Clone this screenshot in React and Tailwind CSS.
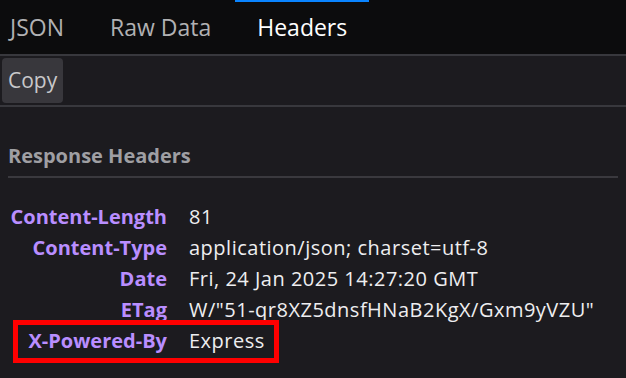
const headers = [
  ["Content-Length", "81"],
  ["Content-Type", "application/json; charset=utf-8"],
  ["Date", "Fri, 24 Jan 2025 14:27:20 GMT"],
  ["ETag", 'W/"51-qr8XZ5dnsfHNaB2KgX/Gxm9yVZU"'],
  ["X-Powered-By", "Express"],
];

export default function App() {
  return (
    <div className="h-[378px] w-[626px] overflow-hidden bg-[#1c1b1f] font-['Open_Sans',sans-serif]">
      {/* Tabs */}
      <div className="flex h-[54px] items-stretch bg-[#0c0c0d] text-[23px] text-[#b1b1b3]">
        <div className="flex items-center px-[10px]">JSON</div>
        <div className="ml-[26px] flex items-center px-[10px]">Raw Data</div>
        <div className="ml-[14px] flex items-center border-t-2 border-[#0a84ff] px-[22px] pb-[2px] text-white">
          Headers
        </div>
      </div>
      <div className="h-[2px] bg-[#38383d]" />

      {/* Toolbar */}
      <div className="flex h-[49px] items-center px-[2px]">
        <button className="h-[45px] rounded-[4px] bg-[#38373c] px-[6px] text-[21px] text-[#c8c8ca]">
          Copy
        </button>
      </div>
      <div className="h-[2px] bg-[#38383d]" />

      {/* Response headers */}
      <div className="px-[8px] pt-[34px]">
        <div className="border-b-2 border-[#3a393e] pb-[5px] text-[20px] font-bold text-[#9f9fa3]">
          Response Headers
        </div>
        <div className="mt-[23px] flex flex-col text-[20px]">
          {headers.map(([name, value]) => (
            <div key={name} className="relative flex h-[31px] items-center whitespace-nowrap">
              <div className="w-[159px] text-right font-bold text-[#b98eff]">{name}</div>
              <div className="ml-[22px] tracking-[0.5px] text-[#eeeef0]">{value}</div>
              {name === "X-Powered-By" && (
                <div className="absolute -top-[5px] -bottom-[7px] left-[5px] w-[266px] border-[5px] border-[#ff0000]" />
              )}
            </div>
          ))}
        </div>
      </div>
    </div>
  );
}
